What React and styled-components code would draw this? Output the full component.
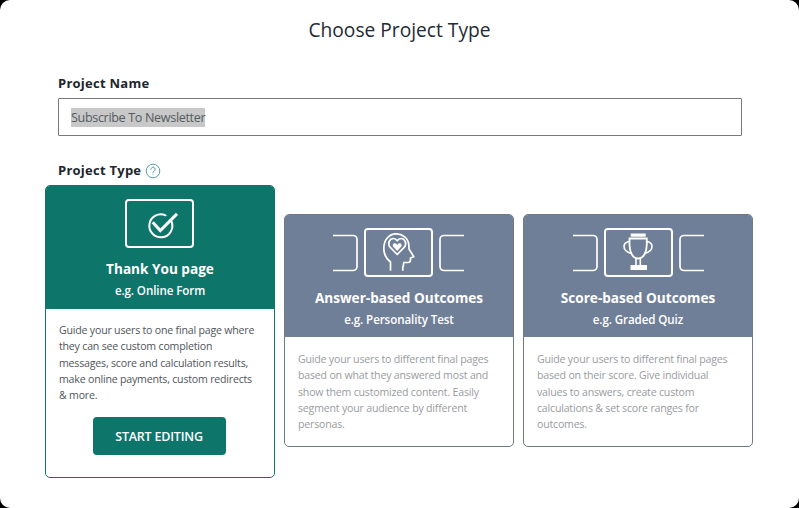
import React from 'react'
import styled, { createGlobalStyle } from 'styled-components'

const GlobalStyle = createGlobalStyle`
  * { box-sizing: border-box; }
  html, body { margin: 0; padding: 0; background: #000; }
  body { font-family: "Open Sans", "Noto Sans", sans-serif; }
`

const Modal = styled.div`
  width: 799px;
  height: 508px;
  background: #fff;
  border-radius: 10px;
  overflow: hidden;
`

const Title = styled.h1`
  margin: 0;
  padding-top: 16px;
  height: 75px;
  text-align: center;
  font-size: 19.2px;
  line-height: 28px;
  font-weight: 400;
  color: #222a33;
`

const Field = styled.div`
  padding: 0 57px 0 58px;
`

const Label = styled.div`
  display: flex;
  align-items: center;
  gap: 4px;
  height: 17px;
  font-size: 13px;
  line-height: 17px;
  font-weight: 700;
  letter-spacing: 0.25px;
  color: #20262d;
`

const NameBox = styled.div`
  margin-top: 6px;
  height: 38px;
  padding: 0 12px;
  display: flex;
  align-items: center;
  border: 1px solid #767a7f;
  border-radius: 1px;
  font-size: 12.6px;
  color: #555b61;
`

const Selected = styled.span`
  background: #c8c8c8;
  line-height: 19px;
  letter-spacing: -0.35px;
`

const TypeField = styled(Field)`
  margin-top: 26px;
`

const Cards = styled.div`
  margin-top: 6px;
  padding-left: 45px;
  display: flex;
  align-items: flex-start;
  gap: 9px;
`

const Card = styled.div`
  width: 230px;
  margin-top: ${(p) => (p.$active ? 0 : 29)}px;
  border: 1px solid ${(p) => (p.$active ? '#0e756b' : '#707a85')};
  border-radius: 5px;
  overflow: hidden;
  background: #fff;
`

const CardHead = styled.div`
  height: ${(p) => (p.$active ? 124 : 123)}px;
  margin: -1px -1px 0;
  padding-top: 14px;
  background: ${(p) => (p.$active ? '#0e756b' : '#707f98')};
  color: #fff;
  text-align: center;
`

const IconRow = styled.div`
  display: flex;
  justify-content: center;
  align-items: center;
  gap: 6px;
  height: 49px;
  padding-right: ${(p) => (p.$nudge ? 1 : 0)}px;
`

const IconBox = styled.div`
  width: 69px;
  height: 49px;
  display: flex;
  align-items: center;
  justify-content: center;
  border: 2px solid #fff;
  border-radius: 4px;
`

const CardTitle = styled.div`
  margin-top: 11px;
  font-size: 13.6px;
  line-height: 20px;
  font-weight: 700;
`

const CardSub = styled.div`
  margin-top: 4px;
  font-size: 11.6px;
  line-height: 16px;
  font-weight: 600;
  letter-spacing: -0.1px;
`

const CardBody = styled.div`
  padding: ${(p) => (p.$active ? 13 : 14)}px 15px ${(p) => (p.$active ? 22 : 14)}px 13px;
`

const Desc = styled.p`
  margin: 0;
  font-size: 10.6px;
  line-height: 16.3px;
  letter-spacing: -0.2px;
  color: ${(p) => (p.$active ? '#50555a' : '#999c9f')};
`

const StartButton = styled.button`
  display: block;
  width: 133px;
  height: 38px;
  margin: 14px auto 0;
  border: 0;
  border-radius: 4px;
  background: #0e756b;
  color: #fff;
  font-family: inherit;
  font-size: 12.5px;
  font-weight: 600;
  letter-spacing: -0.2px;
`

const HelpIcon = () => (
  <svg width="16" height="16" viewBox="0 0 16 16" fill="none" stroke="#5a9fa0" strokeWidth="1">
    <circle cx="8" cy="8" r="6.8" />
    <path d="M5.900 6.300a2.100 2.100 0 1 1 3.400 1.600c-.8.600-1.300 1-1.300 2" strokeLinecap="round" />
    <circle cx="8" cy="11.800" r=".5" fill="#5a9fa0" stroke="none" />
  </svg>
)

const Bracket = ({ flip }) => (
  <svg width="25" height="38" viewBox="0 0 25 38" fill="none" stroke="#fff" strokeWidth="1.7"
    style={flip ? { transform: 'scaleX(-1)' } : undefined}>
    <path d="M0 1.500h20a4 4 0 0 1 4 4v27a4 4 0 0 1-4 4H0" />
  </svg>
)

const CheckIcon = () => (
  <svg width="36" height="30" viewBox="0 0 36 30" fill="none" stroke="#fff">
    <path d="M29.500 12.500a11.500 11.500 0 1 1-6-6.200" strokeWidth="2" strokeLinecap="round" />
    <path d="M10.700 13.200l7.600 8.300L35 4.800" strokeWidth="3" />
  </svg>
)

const HeadIcon = () => (
  <svg width="32" height="40" viewBox="0 0 32 40" fill="none" stroke="#fff" strokeWidth="1.700" strokeLinejoin="round" strokeLinecap="round">
    <path d="M7.500 37v-8C3 25.500.8 20.500.8 15.500.8 7 6 .8 13 .8c7 0 12.500 5 12.800 11.200l.2 4 4.800 7.800-3.300 1.200v1.800c0 1.700-1 2.700-2.700 2.700h-4l-.5 3.500-.5.700V37" />
    <path d="M14.200 21.500L7.500 14.700C4 11 6.300 5.500 10.300 5.500c1.800 0 3 .8 3.900 2.200.9-1.400 2.100-2.200 3.900-2.200 4 0 6.300 5.500 2.800 9.200z" />
    <path d="M14.200 18l-3.700-3.900c-1.500-1.700-.5-3.900 1.300-3.900 1.100 0 1.800.6 2.400 1.700.6-1.100 1.300-1.700 2.400-1.700 1.800 0 2.800 2.200 1.300 3.900z" fill="#fff" stroke="none" />
  </svg>
)

const TrophyIcon = () => (
  <svg width="30" height="40" viewBox="0 0 30 40" fill="none" stroke="#fff">
    <path d="M7.700.5h15v3.300h-15z" fill="#fff" strokeWidth="0" />
    <path d="M6.500 5.500h17.300v6c0 8-3.500 14-8.700 14s-8.600-6-8.600-14z" strokeWidth="1.800" />
    <path d="M6.300 8.500C3 9 1 11 1 13.500c0 3.200 3 5.800 7.500 7M24 8.500c3 .5 5 2.500 5 5 0 3.200-3 5.800-7.500 7" strokeWidth="1.600" />
    <path d="M13 25.500v6.500M17.300 25.500v6.500" strokeWidth="1.600" />
    <path d="M7.500 32h16.500v5H7.500z" fill="#fff" strokeWidth="0" />
  </svg>
)

const cards = [
  {
    active: true,
    nudge: true,
    icon: <CheckIcon />,
    title: 'Thank You page',
    sub: 'e.g. Online Form',
    desc: 'Guide your users to one final page where they can see custom completion messages, score and calculation results, make online payments, custom redirects & more.',
  },
  {
    nudge: true,
    icon: <HeadIcon />,
    title: 'Answer-based Outcomes',
    sub: 'e.g. Personality Test',
    desc: 'Guide your users to different final pages based on what they answered most and show them customized content. Easily segment your audience by different personas.',
  },
  {
    icon: <TrophyIcon />,
    title: 'Score-based Outcomes',
    sub: 'e.g. Graded Quiz',
    desc: 'Guide your users to different final pages based on their score. Give individual values to answers, create custom calculations & set score ranges for outcomes.',
  },
]

const App = () => {
  return (
    <Modal>
      <GlobalStyle />
      <Title>Choose Project Type</Title>
      <Field>
        <Label>Project Name</Label>
        <NameBox>
          <Selected>Subscribe To Newsletter</Selected>
        </NameBox>
      </Field>
      <TypeField>
        <Label>
          Project Type <HelpIcon />
        </Label>
      </TypeField>
      <Cards>
        {cards.map((card) => (
          <Card key={card.title} $active={card.active}>
            <CardHead $active={card.active}>
              <IconRow $nudge={card.nudge}>
                {!card.active && <Bracket />}
                <IconBox>{card.icon}</IconBox>
                {!card.active && <Bracket flip />}
              </IconRow>
              <CardTitle>{card.title}</CardTitle>
              <CardSub>{card.sub}</CardSub>
            </CardHead>
            <CardBody $active={card.active}>
              <Desc $active={card.active}>{card.desc}</Desc>
              {card.active && <StartButton>START EDITING</StartButton>}
            </CardBody>
          </Card>
        ))}
      </Cards>
    </Modal>
  )
}

export default App
